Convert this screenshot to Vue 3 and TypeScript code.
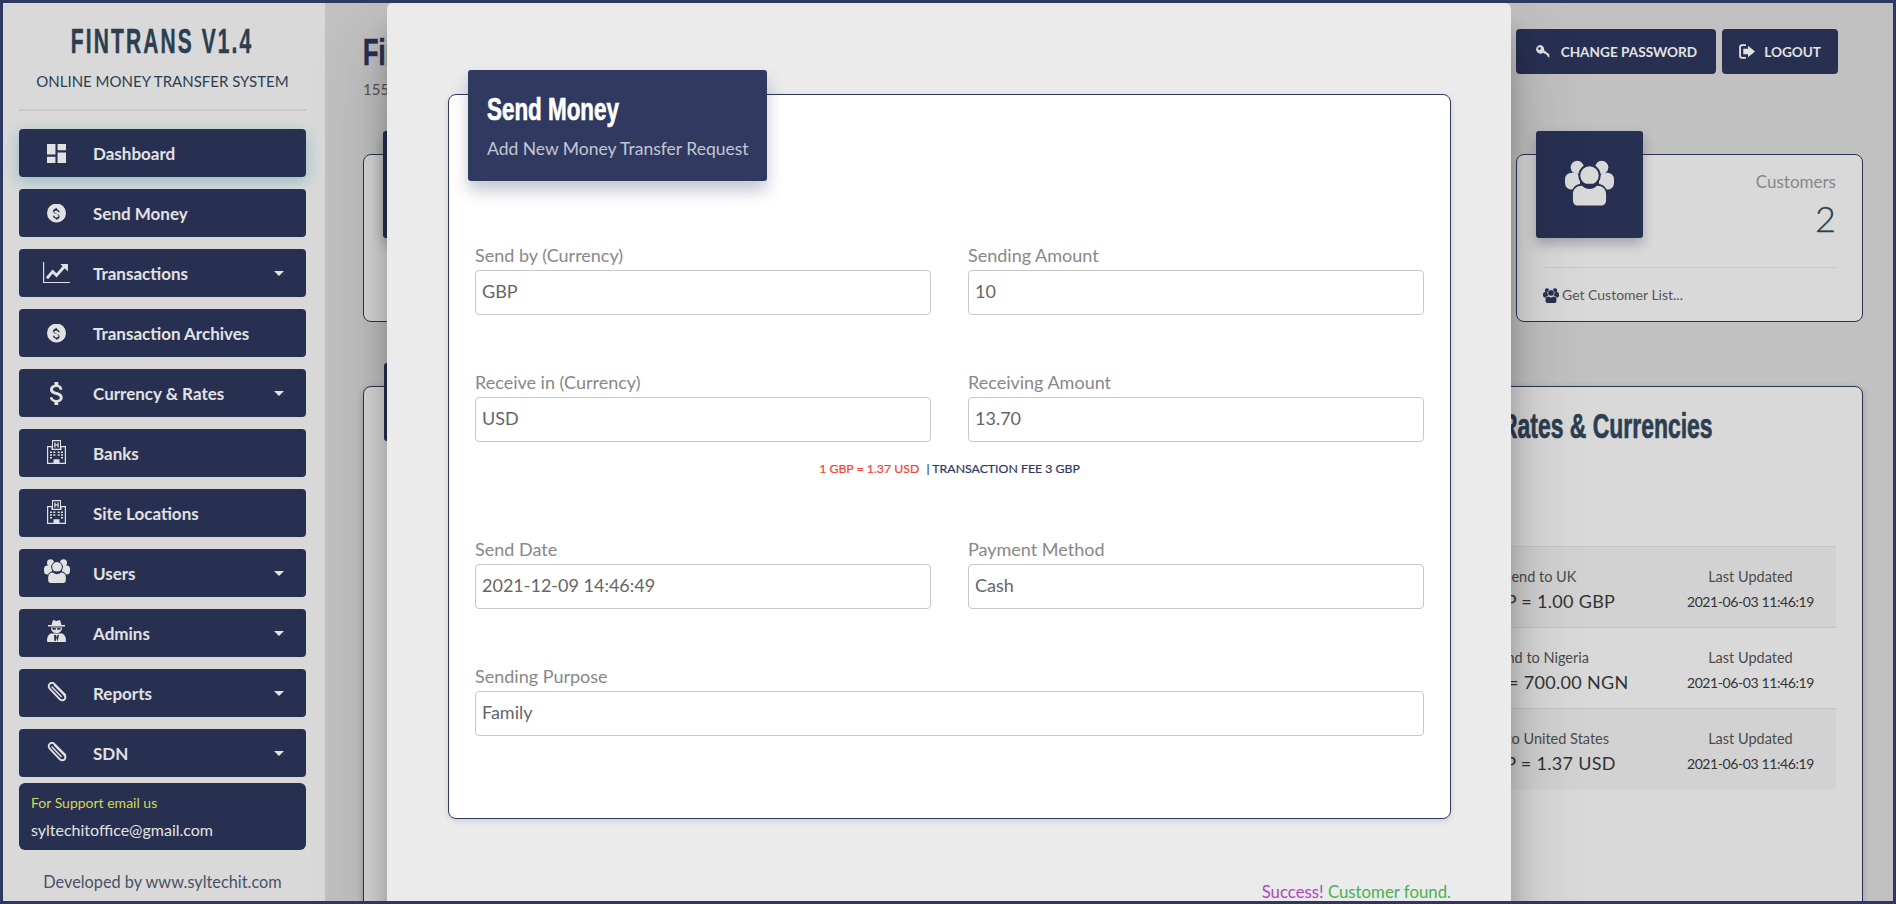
<script setup lang="ts">
interface NavItem { label: string; icon: string; caret?: boolean; glow?: boolean }
const nav: NavItem[] = [
  { label: 'Dashboard', icon: 'dash', glow: true },
  { label: 'Send Money', icon: 'coin' },
  { label: 'Transactions', icon: 'chart', caret: true },
  { label: 'Transaction Archives', icon: 'coin' },
  { label: 'Currency & Rates', icon: 'dollar', caret: true },
  { label: 'Banks', icon: 'hosp' },
  { label: 'Site Locations', icon: 'hosp' },
  { label: 'Users', icon: 'users', caret: true },
  { label: 'Admins', icon: 'spy', caret: true },
  { label: 'Reports', icon: 'clip', caret: true },
  { label: 'SDN', icon: 'clip', caret: true },
]
const stats = ['Requests', 'Transfers', 'Receivers', 'Customers']
const rates = [
  { t: 'Send to UK', v: '1 GBP = 1.00 GBP' },
  { t: 'Send to Nigeria', v: '1 GBP = 700.00 NGN' },
  { t: 'Send to United States', v: '1 GBP = 1.37 USD' },
]
</script>

<template>
  <div class="frame">
    <svg class="sprite" aria-hidden="true">
      <symbol id="i-dash" viewBox="3 3 18 18"><path d="M3 13h8V3H3v10zm0 8h8v-6H3v6zm10 0h8V11h-8v10zm0-18v6h8V3h-8z" fill="currentColor"/></symbol>
      <symbol id="i-coin" viewBox="2 2 20 20"><path fill-rule="evenodd" d="M12 2a10 10 0 1 0 0 20 10 10 0 0 0 0-20zm.7 15.900V19h-1.400v-1.100c-1.700-.2-3-1.300-3.100-3h1.500c.1 1 .9 1.700 2.300 1.700 1.500 0 2.100-.8 2.100-1.500 0-.8-.5-1.500-2.300-2-2.200-.5-3.400-1.400-3.400-3 0-1.500 1.100-2.500 2.800-2.800V7h1.400v1.300c1.600.3 2.600 1.400 2.700 2.800h-1.500c-.1-1-.8-1.600-2.100-1.600-1.300 0-2.100.7-2.100 1.500s.6 1.300 2.300 1.800c2 .5 3.400 1.300 3.400 3.100 0 1.500-1.100 2.500-2.900 2.800z" fill="currentColor" transform="translate(0 -.5)"/></symbol>
      <symbol id="i-chart" viewBox="0 0 28 22"><path d="M.5 0v21.500H28" fill="none" stroke="currentColor" stroke-width="1.200"/><path d="M4 17l6-7 4 4 8-9" fill="none" stroke="currentColor" stroke-width="3"/><path d="M18 2h8v8z" fill="currentColor"/></symbol>
      <symbol id="i-dollar" viewBox="6.500 3 11 18"><path d="M11.800 10.900c-2.270-.59-3-1.200-3-2.150 0-1.090 1.010-1.850 2.700-1.850 1.780 0 2.440.85 2.500 2.100h2.210c-.07-1.720-1.120-3.300-3.210-3.810V3h-3v2.160c-1.940.42-3.500 1.680-3.500 3.610 0 2.310 1.910 3.460 4.700 4.130 2.500.6 3 1.480 3 2.410 0 .69-.49 1.790-2.700 1.790-2.060 0-2.870-.92-2.980-2.100h-2.200c.12 2.190 1.760 3.420 3.680 3.830V21h3v-2.150c1.950-.37 3.500-1.500 3.500-3.550 0-2.840-2.430-3.810-4.700-4.400z" fill="currentColor"/></symbol>
      <symbol id="i-hosp" viewBox="0 0 19 24"><path fill-rule="evenodd" fill="currentColor" d="M5 0h9v6h5v18H0V6h5zM6 1.300v7.400h7V1.300zM1.200 7.200v15.600h5.300v-3.500h6v3.500h5.300V7.200H14.500v2.800h-10V7.200z"/><path fill="currentColor" d="M7.300 2.500h1.200v1.800h2V2.500h1.200v5h-1.200V5.500h-2v2H7.300zM3 11.500h2V13H3zm3.300 0h2V13h-2zm4.400 0h2V13h-2zm3.300 0h2V13h-2zM3 14.300h2v1.500H3zm3.300 0h2v1.500h-2zm4.400 0h2v1.500h-2zm3.300 0h2v1.500h-2zM3 17.100h2v1.500H3zm11 0h2v1.500h-2z"/></symbol>
      <symbol id="i-users" viewBox="0 0 26 24">
        <g fill="currentColor"><circle cx="6.500" cy="3.700" r="3.500"/><circle cx="19.500" cy="3.700" r="3.500"/><rect x="0" y="6.500" width="8" height="9" rx="3.500"/><rect x="18" y="6.500" width="8" height="9" rx="3.500"/></g>
        <circle cx="13" cy="8" r="5.400" fill="currentColor" stroke="var(--ico-bg)" stroke-width="1"/>
        <path d="M3.500 23V18.500C3.500 15 6 13 9 13h8c3 0 5.500 2 5.500 5.500V23z" fill="var(--ico-bg)" transform="translate(0 -.6)"/>
        <path d="M4.200 21V18c0-2.800 2-4.500 4.800-4.500 1.300 1.200 2.500 1.700 4 1.700s2.700-.5 4-1.700c2.800 0 4.800 1.700 4.800 4.500v3c0 1.700-1 3-2.700 3H6.900c-1.700 0-2.700-1.300-2.700-3z" fill="currentColor"/>
      </symbol>
      <symbol id="i-spy" viewBox="0 0 19 22"><path fill="currentColor" d="M6 0l3.500 1L13 0l1.500 5H18v1.500H1V5h3.500zM4 7.500h11c0 3.500-2 5.500-5.500 5.500S4 11 4 7.500zM1.500 22C.6 22 0 21.500 0 20.500c0-3 1-5.500 3.500-7h12c2.500 1.500 3.500 4 3.500 7 0 1-.6 1.500-1.500 1.500z"/><path fill="var(--ico-bg)" d="M5.500 8h3.300v1.800H5.500zm4.700 0h3.300v1.800h-3.300zM7 15h1.800l.7 2.500-.7 3.500H7.400zm5 0h-1.800l-.7 2.500.7 3.500h.4z"/></symbol>
      <symbol id="i-clip" viewBox="0 0 20 20"><path d="M18.300 12.800L7.300 1.900C6 .6 4 .6 2.700 1.900 1.300 3.300 1.400 5.300 2.700 6.600l9.700 10.200c1.700 1.800 3.800 1.900 5 .7 1.300-1.300 1.200-3.300-.4-5L7.600 3" fill="none" stroke="currentColor" stroke-width="1.900" stroke-linecap="round"/><path d="M5 4.900l9.200 9.500" fill="none" stroke="currentColor" stroke-width="1.500" stroke-linecap="round"/></symbol>
      <symbol id="i-key" viewBox="0 0 16 16"><path d="M5.500 1a4.700 4.700 0 1 0 2.800 8.400l1.200 1.200 1.400-.7.400 1.500 1.200.2.300 1.700 2 1-.1-3.300-5.600-4.300A4.700 4.700 0 0 0 5.500 1zM4.200 3.400a1.500 1.500 0 1 1 0 3 1.500 1.500 0 0 1 0-3z" fill="currentColor" fill-rule="evenodd"/></symbol>
      <symbol id="i-out" viewBox="0 0 15 14"><path d="M6.500 1H3C1.500 1 1 2 1 3v8c0 1 .5 2 2 2h3.500" fill="none" stroke="currentColor" stroke-width="1.700"/><path d="M8.500 1.500L15 7l-6.500 5.500V9.500H4v-5h4.500z" fill="currentColor"/></symbol>
    </svg>

    <aside class="side">
      <h1 class="brand"><span class="brand-in">FINTRANS V1.4</span></h1>
      <p class="tag">ONLINE MONEY TRANSFER SYSTEM</p>
      <hr class="side-rule" />
      <nav class="nav">
        <a v-for="n in nav" :key="n.label" class="nav-item" :class="{ glow: n.glow }">
          <span class="nav-ico"><svg class="ico" :class="'ico-' + n.icon"><use :href="'#i-' + n.icon" /></svg></span>
          <span class="nav-text">{{ n.label }}</span>
          <i v-if="n.caret" class="caret"></i>
        </a>
      </nav>
      <div class="support">
        <div class="support-a">For Support email us</div>
        <div class="support-b">syltechitoffice@gmail.com</div>
      </div>
      <div class="dev">Developed by www.syltechit.com</div>
    </aside>

    <main class="main">
      <header class="top">
        <div>
          <h2 class="page-title"><span class="cond">Fintrans</span></h2>
          <p class="page-sub">155</p>
        </div>
        <div class="actions">
          <button class="btn"><svg class="btn-ico"><use href="#i-key" /></svg>CHANGE PASSWORD</button>
          <button class="btn btn-out"><svg class="btn-ico"><use href="#i-out" /></svg>LOGOUT</button>
        </div>
      </header>

      <section class="stats">
        <div v-for="s in stats" :key="s" class="stat">
          <div class="stat-top">
            <div class="stat-block"><svg class="stat-ico"><use href="#i-users" /></svg></div>
            <div class="stat-info">
              <div class="stat-label">{{ s }}</div>
              <div class="stat-num">2</div>
            </div>
          </div>
          <div class="stat-foot"><svg class="foot-ico"><use href="#i-users" /></svg>Get Customer List...</div>
        </div>
      </section>

      <section class="wide">
        <div class="wide-block"></div>
        <div class="rates">
          <h3 class="rates-title"><span class="cond rates-cond">Rates &amp; Currencies</span></h3>
          <div class="rate-list">
            <div v-for="r in rates" :key="r.t" class="rate">
              <div class="rate-a"><div class="rate-s">{{ r.t }}</div><div class="rate-v">{{ r.v }}</div></div>
              <div class="rate-b"><div class="rate-s">Last Updated</div><div class="rate-d">2021-06-03 11:46:19</div></div>
            </div>
          </div>
        </div>
      </section>
    </main>

    <div class="modal">
      <div class="form-card">
        <div class="form-head">
          <div class="form-title"><span class="cond">Send Money</span></div>
          <div class="form-sub">Add New Money Transfer Request</div>
        </div>
        <div class="row row-1">
          <label class="field"><span>Send by (Currency)</span><input value="GBP" readonly /></label>
          <label class="field"><span>Sending Amount</span><input value="10" readonly /></label>
        </div>
        <div class="row row-2">
          <label class="field"><span>Receive in (Currency)</span><input value="USD" readonly /></label>
          <label class="field"><span>Receiving Amount</span><input value="13.70" readonly /></label>
        </div>
        <p class="note"><span class="note-red">1 GBP = 1.37 USD</span> | TRANSACTION FEE 3 GBP</p>
        <div class="row row-3">
          <label class="field"><span>Send Date</span><input value="2021-12-09 14:46:49" readonly /></label>
          <label class="field"><span>Payment Method</span><input value="Cash" readonly /></label>
        </div>
        <div class="row row-4">
          <label class="field full"><span>Sending Purpose</span><input value="Family" readonly /></label>
        </div>
      </div>
      <p class="status"><span class="ok-a">Success!</span> <span class="ok-b">Customer found.</span></p>
    </div>
  </div>
</template>

<style>
html, body { margin: 0; height: 100%; overflow: hidden; }
</style>

<style scoped>
* { box-sizing: border-box; }
.frame {
  --ico-bg: #283052;
  position: relative;
  display: flex;
  width: 100vw;
  height: 100vh;
  overflow: hidden;
  border: 3px solid #2f3860;
  background: #c1c1c1;
  font-family: Lato, "Noto Sans", sans-serif;
  color: #2c3e50;
}
.sprite { position: absolute; width: 0; height: 0; }
.cond {
  display: inline-block;
  white-space: nowrap;
  -webkit-text-stroke: .7px currentColor;
  transform: scaleX(.7);
  transform-origin: left center;
}
.rates-cond { transform: scaleX(.655); }

.side {
  flex: 0 0 322px;
  width: 322px;
  min-width: 0;
  display: flex;
  flex-direction: column;
  padding: 0 19px 0 16px;
  background: #d9d9d9;
}
.brand {
  display: flex;
  justify-content: center;
  margin: 21px 0 0;
  font: 700 35px/34px "Liberation Sans", sans-serif;
  color: #2c3e50;
}
.brand-in {
  flex: none;
  white-space: nowrap;
  letter-spacing: 3.500px;
  -webkit-text-stroke: .5px currentColor;
  transform: scaleX(.6);
}
.tag { margin: 13px 0 0; text-align: center; font-size: 15px; line-height: 20px; color: #2c3e50; white-space: nowrap; }
.side-rule { width: 100%; margin: 18px 0 18px; border: 0; border-top: 2px solid #c8c8c8; }
.nav { display: flex; flex-direction: column; gap: 12px; }
.nav-item {
  display: flex;
  align-items: center;
  height: 48px;
  border-radius: 4px;
  background: #283052;
  color: #e2e2e2;
  font-size: 17px;
  font-weight: 700;
}
.nav-item.glow { box-shadow: 0 4px 14px rgba(60, 150, 170, .45); }
.nav-ico { flex: 0 0 75px; display: flex; justify-content: center; }
.ico { width: 19px; height: 19px; color: #e2e2e2; }
.ico-chart { width: 27px; height: 21px; margin-top: -2px; }
.ico-dollar { width: 14px; height: 23px; }
.ico-hosp { width: 19px; height: 24px; margin-top: -3px; }
.ico-users { width: 26px; height: 24px; margin-top: -4px; }
.ico-spy { width: 19px; height: 22px; margin-top: -4px; }
.ico-clip { width: 20px; height: 20px; margin-top: -2px; }
.nav-text { flex: 1; margin-left: -1px; }
.caret {
  width: 0;
  height: 0;
  margin-right: 22px;
  border-top: 5px solid #e2e2e2;
  border-left: 5px solid transparent;
  border-right: 5px solid transparent;
}
.support {
  margin-top: 6px;
  height: 67px;
  padding: 10px 12px 0;
  border-radius: 6px;
  background: #283052;
}
.support-a { font-size: 14px; line-height: 20px; color: #d6d84e; }
.support-b { margin-top: 7px; font-size: 16px; line-height: 20px; color: #e2e2e2; }
.dev { margin-top: 21px; text-align: center; font-size: 16.300px; line-height: 22px; color: #4a5068; white-space: nowrap; }

.main { flex: 1; min-width: 0; padding: 26px 30px 0 38px; }
.top { display: flex; justify-content: space-between; height: 125px; }
.page-title { margin: 4px 0 0; font: 700 36px/40px "Liberation Sans", sans-serif; color: #283052; }
.page-sub { margin: 6px 0 0; font-size: 15px; line-height: 20px; color: #555; }
.actions { display: flex; gap: 6px; height: 45px; margin-right: 25px; }
.btn {
  display: flex;
  align-items: center;
  gap: 10px;
  padding: 0 19px;
  border: 0;
  border-radius: 4px;
  background: #283052;
  color: #e2e2e2;
  font: 700 13.600px Lato, sans-serif;
  white-space: nowrap;
}
.btn-out { padding: 0 17px; gap: 9px; }
.btn-ico { width: 16px; height: 15px; }
.stats { display: grid; grid-template-columns: repeat(4, 347px); justify-content: space-between; }
.stat {
  height: 168px;
  padding: 0 26px 0 19px;
  border: 1px solid #2a3358;
  border-radius: 8px;
  background: #d9d9d9;
}
.stat-top { display: flex; justify-content: space-between; height: 112px; }
.stat-block {
  width: 107px;
  height: 107px;
  margin-top: -24px;
  display: flex;
  align-items: center;
  justify-content: center;
  border-radius: 3px;
  background: #283052;
  box-shadow: 0 6px 12px rgba(40, 48, 82, .3);
}
.stat-ico { width: 49px; height: 46px; margin-top: -4px; color: #d9d9d9; }
.stat-info { text-align: right; }
.stat-label { margin-top: 15px; font-size: 17px; line-height: 24px; color: #888; }
.stat-num { margin-top: 3px; font-size: 36px; line-height: 42px; font-weight: 300; -webkit-text-stroke: .3px currentColor; color: #2c3e50; }
.stat-foot {
  display: flex;
  align-items: center;
  gap: 3px;
  margin-left: 7px;
  padding-top: 18px;
  border-top: 1px solid #cacaca;
  font-size: 14px;
  line-height: 18px;
  color: #555;
}
.foot-ico { width: 16px; height: 15px; color: #283052; --ico-bg: #d9d9d9; }

.wide {
  position: relative;
  display: flex;
  justify-content: flex-end;
  height: 640px;
  margin-top: 64px;
  padding-right: 26px;
  border: 1px solid #2a3358;
  border-radius: 8px;
  background: #d9d9d9;
  box-shadow: 0 2px 6px rgba(0, 0, 0, .2);
}
.wide-block {
  position: absolute;
  left: 20px;
  top: -24px;
  width: 200px;
  height: 78px;
  border-radius: 3px;
  background: #283052;
}
.rates { width: 385px; }
.rates-title {
  margin: 21px 0 0 50px;
  font: 700 35px/36px "Liberation Sans", sans-serif;
  color: #2c3e50;
}
.rate-list { margin-top: 102px; }
.rate {
  display: flex;
  justify-content: space-between;
  height: 81px;
  padding: 20px 22px 0 0;
  border-top: 1px solid #c4c4c4;
}
.rate:nth-child(odd) { background: #d2d2d2; }
.rate-a { width: 178px; text-align: center; }
.rate-b { text-align: center; }
.rate-s { font-size: 14.500px; line-height: 20px; color: #4b4b4b; }
.rate-v { margin-top: 2px; font-size: 18px; letter-spacing: .3px; line-height: 24px; color: #333; }
.rate-d { margin-top: 3px; font-size: 14px; letter-spacing: -.4px; line-height: 24px; color: #333; }

.modal {
  position: absolute;
  top: 0;
  left: 384px;
  width: 1124px;
  height: 1000px;
  padding: 91px 60px 0 61px;
  border-radius: 6px;
  background: #ebebeb;
  box-shadow: 0 27px 24px rgba(0, 0, 0, .2), 0 40px 77px rgba(0, 0, 0, .22);
}
.form-card {
  height: 725px;
  padding: 0 26px;
  border: 1px solid #2f3860;
  border-radius: 8px;
  background: #fff;
  box-shadow: 0 2px 6px rgba(0, 0, 0, .12);
}
.form-head {
  width: 299px;
  height: 111px;
  margin: -25px 0 0 -7px;
  padding: 20px 19px 0;
  border-radius: 3px;
  background: #303a60;
  box-shadow: 0 10px 16px rgba(48, 58, 96, .28);
}
.form-title { font: 700 32px/38px "Liberation Sans", sans-serif; color: #fff; }
.form-sub { margin-top: 8px; font-size: 17.500px; line-height: 26px; color: #c3c6d3; white-space: nowrap; }
.row { display: grid; grid-template-columns: 456px 456px; justify-content: space-between; }
.row-1 { margin-top: 67px; }
.row-2 { margin-top: 60px; }
.row-3 { margin-top: 63px; }
.row-4 { margin-top: 60px; }
.field { display: flex; flex-direction: column; }
.field.full { grid-column: 1 / -1; }
.field span { margin-top: -4px; margin-bottom: 4px; font-size: 18px; line-height: 22px; color: #888; }
.field input {
  height: 45px;
  padding: 0 6px 4px;
  border: 1px solid #c8c8c8;
  border-radius: 4px;
  background: #fff;
  color: #666;
  font: 18px Lato, sans-serif;
  outline: 0;
}
.note { margin: 17px 0 0; text-align: center; font-size: 12.300px; line-height: 20px; color: #2f3860; -webkit-text-stroke: .2px currentColor; }
.note-red { margin-right: 4px; color: #f44336; }
.status { margin: 61px 0 0; text-align: right; font-size: 16.800px; line-height: 24px; }
.ok-a { color: #ab47bc; }
.ok-b { color: #4caf50; }
</style>
